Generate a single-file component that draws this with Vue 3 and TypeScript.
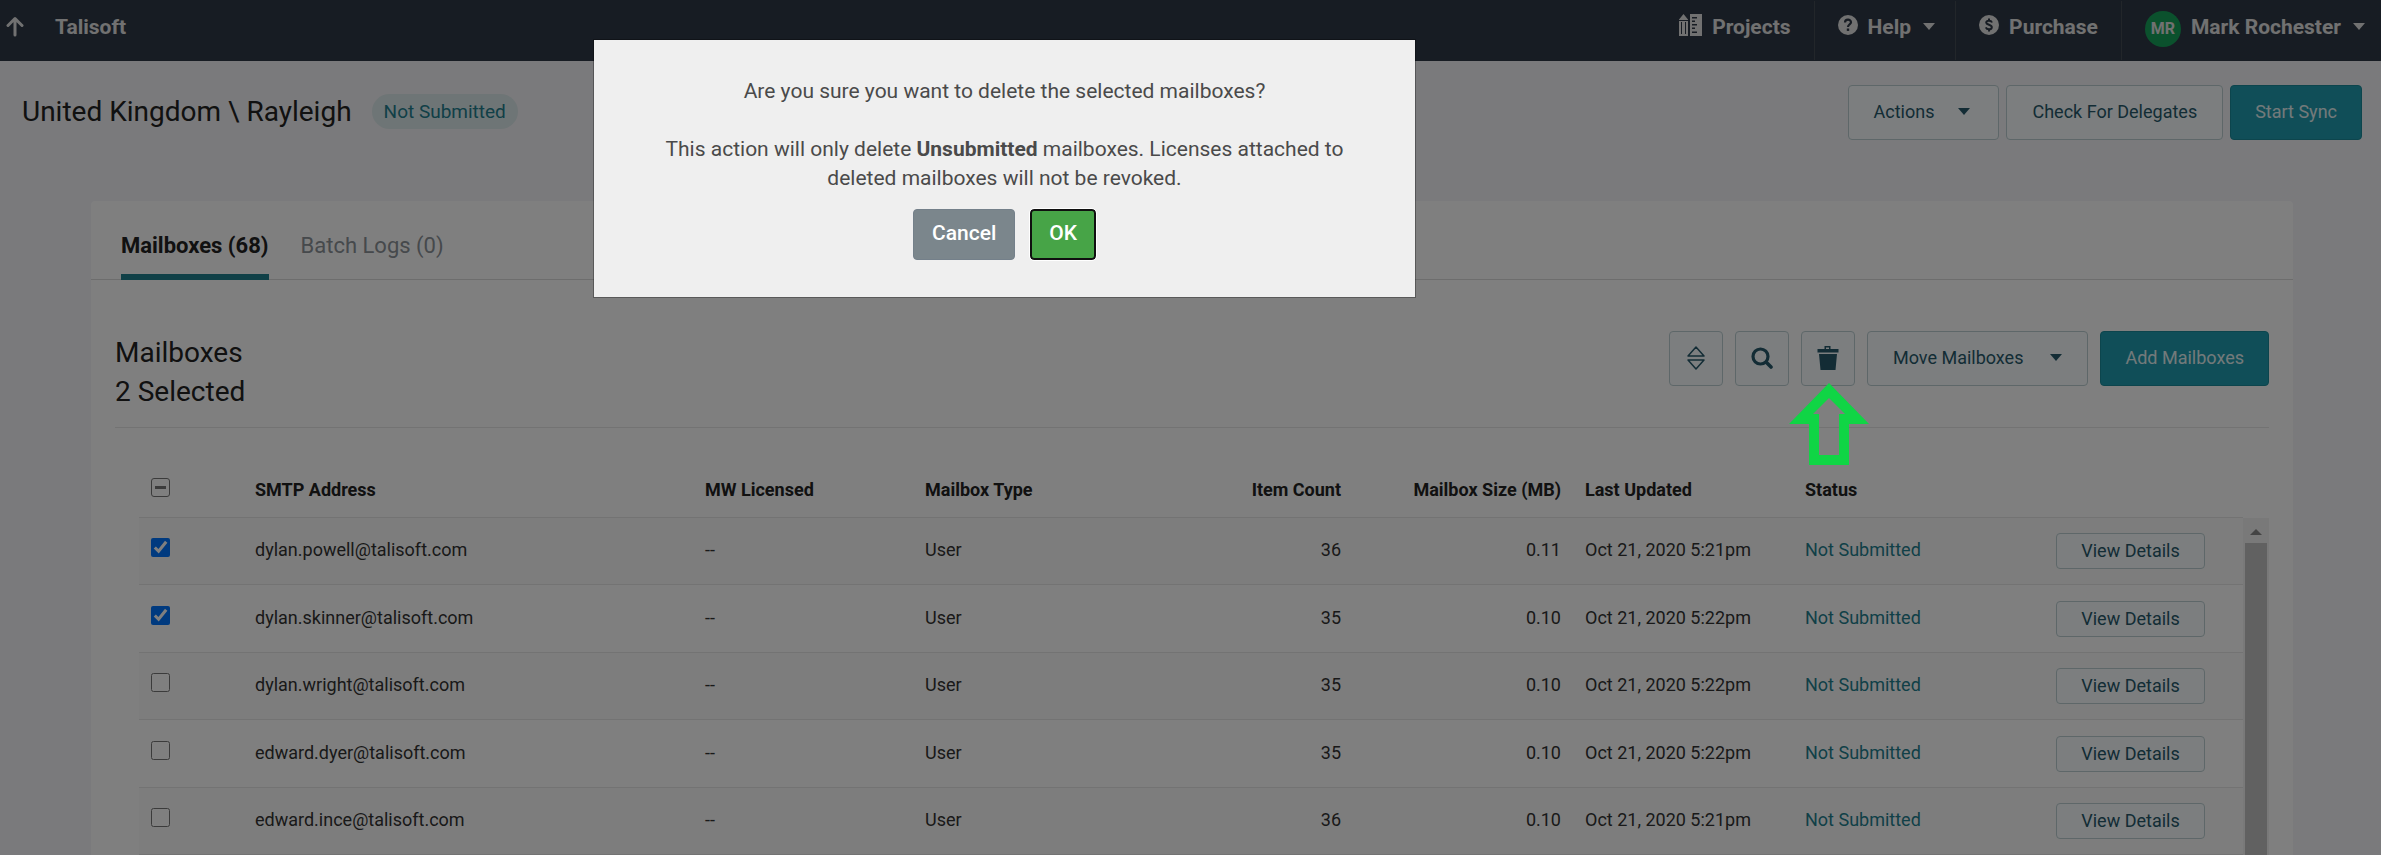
<script setup lang="ts">
import { ref } from 'vue'

interface Mailbox {
  address: string
  licensed: string
  type: string
  items: number
  size: string
  updated: string
  status: string
  selected: boolean
}

const mailboxes = ref<Mailbox[]>([
  { address: 'dylan.powell@talisoft.com', licensed: '--', type: 'User', items: 36, size: '0.11', updated: 'Oct 21, 2020 5:21pm', status: 'Not Submitted', selected: true },
  { address: 'dylan.skinner@talisoft.com', licensed: '--', type: 'User', items: 35, size: '0.10', updated: 'Oct 21, 2020 5:22pm', status: 'Not Submitted', selected: true },
  { address: 'dylan.wright@talisoft.com', licensed: '--', type: 'User', items: 35, size: '0.10', updated: 'Oct 21, 2020 5:22pm', status: 'Not Submitted', selected: false },
  { address: 'edward.dyer@talisoft.com', licensed: '--', type: 'User', items: 35, size: '0.10', updated: 'Oct 21, 2020 5:22pm', status: 'Not Submitted', selected: false },
  { address: 'edward.ince@talisoft.com', licensed: '--', type: 'User', items: 36, size: '0.10', updated: 'Oct 21, 2020 5:21pm', status: 'Not Submitted', selected: false },
])
</script>

<template>
  <div class="page">
    <header class="topbar">
      <a href="#" class="up" aria-label="Up one level">
        <svg width="18" height="22" viewBox="0 0 18 22" fill="none" stroke="currentColor" stroke-width="3" stroke-linecap="round" stroke-linejoin="round">
          <path d="M9 19V3M2 9.500 9 2.500l7 7" />
        </svg>
      </a>
      <a href="#" class="brand">Talisoft</a>
      <nav class="nav">
        <a href="#" class="nav-item projects">
          <svg width="23" height="22" viewBox="0 0 23 22" fill="currentColor">
            <path fill-rule="evenodd" d="M4.500 0 9 5.500V22H0V5.500zM2 8v12h1V8zM6 8v12h1V8zM0 6v1h9V6z" />
            <path fill-rule="evenodd" d="M11 0h12v22H11zM13 3v1.500h5V3zM13 6.500V8h3V6.500zM13 10v1.500h5V10zM13 13.500V15h3v-1.500zM13 17.500V19h5v-1.500z" />
          </svg>
          <span>Projects</span>
        </a>
        <a href="#" class="nav-item help">
          <svg width="20" height="20" viewBox="0 0 20 20">
            <circle cx="10" cy="10" r="10" fill="currentColor" />
            <path d="M7 7.500C7 3.800 13 3.800 13 7.300c0 2.200-3 2-3 4.700" fill="none" stroke="#2e3846" stroke-width="2.200" />
            <rect x="8.800" y="13.500" width="2.400" height="2.400" fill="#2e3846" />
          </svg>
          <span>Help</span>
          <i class="caret"></i>
        </a>
        <a href="#" class="nav-item purchase">
          <svg width="20" height="20" viewBox="0 0 20 20">
            <circle cx="10" cy="10" r="10" fill="currentColor" />
            <path d="M13 7.500C12 5 7 5.200 7.200 7.700c.2 2.500 5.600 1.700 5.600 4.500 0 2.800-5 2.700-6 .2M10 3.500V6M10 14v2.500" fill="none" stroke="#2e3846" stroke-width="2" />
          </svg>
          <span>Purchase</span>
        </a>
        <a href="#" class="nav-item account">
          <span class="avatar">MR</span>
          <span>Mark Rochester</span>
          <i class="caret"></i>
        </a>
      </nav>
    </header>

    <section class="heading">
      <h1>United Kingdom \ Rayleigh</h1>
      <span class="pill">Not Submitted</span>
      <div class="heading-actions">
        <button type="button" class="btn with-caret actions">Actions<i class="caret"></i></button>
        <button type="button" class="btn">Check For Delegates</button>
        <button type="button" class="btn primary">Start Sync</button>
      </div>
    </section>

    <main class="card">
      <nav class="tabs">
        <a href="#" class="tab active">Mailboxes (68)</a>
        <a href="#" class="tab">Batch Logs (0)</a>
      </nav>

      <div class="panel">
        <div class="panel-head">
          <h2>Mailboxes<br />2 Selected</h2>
          <div class="tools">
            <button type="button" class="btn icon" aria-label="Sort">
              <svg width="18" height="24" viewBox="0 0 18 24" fill="none" stroke="currentColor" stroke-width="1.500" stroke-linejoin="round">
                <path d="M9 1 17 10H1zM9 23 17 14H1z" />
              </svg>
            </button>
            <button type="button" class="btn icon" aria-label="Search">
              <svg width="22" height="22" viewBox="0 0 22 22" fill="none" stroke="currentColor" stroke-linecap="round">
                <circle cx="9.500" cy="9.500" r="7.500" stroke-width="3.200" />
                <path d="m15.500 15.500 4.500 4.500" stroke-width="3.600" />
              </svg>
            </button>
            <div class="tool-marked">
              <button type="button" class="btn icon" aria-label="Delete">
                <svg width="22" height="24" viewBox="0 0 22 24" fill="currentColor">
                  <path d="M7.500 3V0h6v3H21.500v3.500H.5V3zM9 3h3V1.500H9zM2 8h18l-1.500 16h-15z" fill-rule="evenodd" />
                </svg>
              </button>
              <svg class="pointer" width="80" height="82" viewBox="0 0 80 82" aria-hidden="true">
                <path fill="#10d545" fill-rule="evenodd" d="M40 0 80 41H60V82H20V41H0zM40 15 24 31h6V72h20V31h6z" />
              </svg>
            </div>
            <button type="button" class="btn with-caret move">Move Mailboxes<i class="caret"></i></button>
            <button type="button" class="btn primary">Add Mailboxes</button>
          </div>
        </div>

        <div class="list">
          <table>
            <colgroup>
              <col class="c-check" />
              <col class="c-address" />
              <col span="6" class="c-data" />
              <col class="c-button" />
            </colgroup>
            <thead>
              <tr>
                <th class="check"><input class="partial" type="checkbox" aria-label="Select all mailboxes" :indeterminate="true" /></th>
                <th>SMTP Address</th>
                <th>MW Licensed</th>
                <th>Mailbox Type</th>
                <th class="num">Item Count</th>
                <th class="num">Mailbox Size (MB)</th>
                <th>Last Updated</th>
                <th>Status</th>
                <th></th>
              </tr>
            </thead>
            <tbody>
              <tr v-for="m in mailboxes" :key="m.address">
                <td class="check"><input v-model="m.selected" type="checkbox" :aria-label="'Select ' + m.address" /></td>
                <td>{{ m.address }}</td>
                <td>{{ m.licensed }}</td>
                <td>{{ m.type }}</td>
                <td class="num">{{ m.items }}</td>
                <td class="num">{{ m.size }}</td>
                <td>{{ m.updated }}</td>
                <td><a href="#" class="status">{{ m.status }}</a></td>
                <td class="view"><button type="button" class="btn small">View Details</button></td>
              </tr>
            </tbody>
          </table>
          <div class="scrollbar" aria-hidden="true">
            <i class="scroll-up"></i>
            <div class="thumb"></div>
          </div>
        </div>
      </div>
    </main>

    <div class="backdrop"></div>
    <div class="modal-layer">
      <div class="modal" role="dialog" aria-modal="true" aria-label="Delete mailboxes">
        <p>Are you sure you want to delete the selected mailboxes?</p>
        <p>This action will only delete <b>Unsubmitted</b> mailboxes. Licenses attached to deleted mailboxes will not be revoked.</p>
        <div class="modal-buttons">
          <button type="button" class="cancel">Cancel</button>
          <button type="button" class="ok">OK</button>
        </div>
      </div>
    </div>
  </div>
</template>

<style>
body {
  margin: 0;
  background: #f4f4f8;
}
</style>

<style scoped>
.page,
.page * {
  box-sizing: border-box;
}
.page {
  height: 100vh;
  overflow: hidden;
  display: flex;
  flex-direction: column;
  background: #f4f4f8;
  color: #333;
  font: 18px/24px Roboto, "Liberation Sans", sans-serif;
}
a {
  color: inherit;
  text-decoration: none;
}
button {
  font: inherit;
  cursor: pointer;
}
.caret {
  border: 6px solid transparent;
  border-top: 7px solid currentColor;
  border-bottom: 0;
}

/* top bar */
.topbar {
  flex: none;
  height: 61px;
  padding: 0 16px 8px 6px;
  display: flex;
  align-items: center;
  background: #2e3846;
  color: #e2e2e2;
  font-size: 21px;
  font-weight: 700;
}
.up {
  display: flex;
  width: 49px;
}
.nav {
  margin-left: auto;
  display: flex;
}
.nav-item {
  height: 59px;
  margin-top: 8px;
  padding: 0 23px 8px;
  display: flex;
  align-items: center;
  gap: 10px;
  border-left: 1px solid #454c55;
}
.nav-item:first-child {
  border-left: 0;
}
.nav-item svg {
  margin-bottom: 4px;
}
.nav-item .caret {
  margin-left: 2px;
}
.nav-item.help {
  padding-right: 20px;
}
.nav-item.account {
  padding-right: 0;
}
.avatar {
  width: 36px;
  height: 36px;
  margin-top: 5px;
  border-radius: 50%;
  background: #17a25b;
  font-size: 16px;
  line-height: 36px;
  text-align: center;
}

/* page heading */
.heading {
  flex: none;
  height: 140px;
  padding: 24px 19px 0 22px;
  display: flex;
  align-items: flex-start;
}
h1,
h2 {
  margin: 0;
  color: #222;
  font-size: 28px;
  font-weight: 400;
  line-height: 39px;
}
h1 {
  padding-top: 7px;
}
.pill {
  height: 35px;
  margin: 9px 0 0 20px;
  padding: 0 12px;
  border-radius: 18px;
  background: #dceaec;
  color: #237f8f;
  font-size: 19px;
  line-height: 35px;
}
.heading-actions {
  margin-left: auto;
  display: flex;
  gap: 7px;
}

/* buttons */
.btn {
  height: 55px;
  padding: 0 25px 2px;
  display: flex;
  align-items: center;
  justify-content: center;
  border: 1px solid #bccfd2;
  border-radius: 4px;
  background: #f8fdff;
  color: #27596b;
  white-space: nowrap;
}
.btn.primary {
  padding: 0 24px 2px;
  border-color: #1b8b9b;
  background: #209db0;
  color: #e6f4f6;
}
.btn.with-caret {
  gap: 24px;
  padding-right: 28px;
}
.btn.move {
  gap: 27px;
  padding-right: 25px;
}
.btn.icon {
  width: 54px;
  padding: 0 0 2px;
}
.btn.small {
  width: 149px;
  height: 36px;
  padding: 0;
}

/* card */
.card {
  flex: 1;
  min-height: 0;
  margin: 0 88px 0 91px;
  display: flex;
  flex-direction: column;
  border-radius: 4px 4px 0 0;
  background: #fff;
}
.tabs {
  flex: none;
  height: 79px;
  padding-left: 30px;
  display: flex;
  gap: 32px;
  border-bottom: 1px solid #dadada;
  font-size: 22px;
}
.tab {
  height: 79px;
  color: #8c9298;
  line-height: 90px;
}
.tab.active {
  border-bottom: 6px solid #21808f;
  color: #222;
  font-weight: 700;
}
.panel {
  flex: 1;
  min-height: 0;
  padding: 51px 24px 0;
  display: flex;
  flex-direction: column;
}
.panel-head {
  flex: none;
  height: 97px;
  display: flex;
  align-items: flex-start;
  justify-content: space-between;
  border-bottom: 1px solid #e6e6e6;
}
h2 {
  padding-top: 2px;
}
.tools {
  display: flex;
  gap: 12px;
}
.tool-marked {
  position: relative;
}
.pointer {
  position: absolute;
  top: 52px;
  left: -12px;
  z-index: 20;
}

/* table */
.list {
  flex: 1;
  min-height: 0;
  padding-left: 24px;
  display: flex;
  overflow: hidden;
}
table {
  flex: 1;
  height: 0;
  table-layout: fixed;
  border-collapse: separate;
  border-spacing: 0;
}
.c-check {
  width: 104px;
}
.c-data {
  width: 220px;
}
.c-button {
  width: 230px;
}
th,
td {
  padding: 0 12px;
  border-bottom: 1px solid #e6e6e6;
  text-align: left;
  white-space: nowrap;
}
th {
  height: 90px;
  padding-top: 34px;
  color: #222;
  font-weight: 700;
}
td {
  height: 67px;
  padding-bottom: 2px;
}
tbody tr:nth-child(even) td {
  height: 68px;
}
tbody tr:nth-child(odd) {
  background: #fbfbfb;
}
.num {
  text-align: right;
}
.check input {
  display: block;
  width: 19px;
  height: 19px;
  margin: 0 0 5px;
  accent-color: #0075ff;
}
.check .partial {
  appearance: none;
  border: 1px solid #767676;
  border-radius: 3px;
  background: linear-gradient(#767676, #767676) center / 11px 3px no-repeat #fff;
}
.view {
  padding: 0 0 0 43px;
}
.status {
  color: #23808f;
}
.scrollbar {
  flex: none;
  width: 26px;
  margin-top: 90px;
  padding: 11px 2px 0;
  display: flex;
  flex-direction: column;
  align-items: center;
  gap: 8px;
  background: #f3f3f3;
}
.scroll-up {
  border: 6px solid transparent;
  border-top: 0;
  border-bottom-color: #888;
}
.thumb {
  flex: 1;
  width: 100%;
  background: #c2c2c2;
}

/* dialog */
.backdrop {
  position: fixed;
  inset: 0;
  z-index: 10;
  background: rgba(0, 0, 0, 0.5);
}
.modal-layer {
  position: fixed;
  inset: 39px 0 auto;
  z-index: 30;
  display: flex;
  justify-content: center;
  padding-right: 372px;
}
.modal {
  width: 823px;
  padding: 37px 60px;
  border: 1px solid rgba(0, 0, 0, 0.3);
  background: #efefef;
  background-clip: padding-box;
  color: #4a4a4a;
  font-size: 21px;
  line-height: 29px;
  text-align: center;
}
.modal p {
  margin: 0 0 29px;
}
.modal p + p {
  margin-bottom: 16px;
}
.modal-buttons {
  display: flex;
  justify-content: center;
  gap: 15px;
}
.modal-buttons button {
  height: 51px;
  padding: 0 18px 2px;
  border: 1px solid #74808a;
  border-radius: 4px;
  background: #7b868c;
  color: #fff;
  font-weight: 500;
}
.modal-buttons .ok {
  padding: 0 17px 2px;
  border: 2px solid #101010;
  outline: 1px solid #fff;
  background: #47a447;
}
</style>
